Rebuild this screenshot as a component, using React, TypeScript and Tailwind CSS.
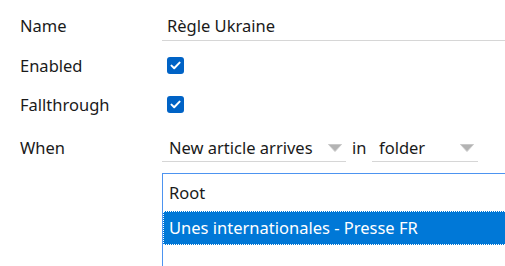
const Checked = () => (
  <div className="w-[17px] h-[17px] rounded-[3px] bg-[#0063c6] flex items-center justify-center">
    <svg width="11" height="9" viewBox="0 0 11 9" fill="none">
      <path d="M1.5 4.6 L4.2 7.2 L9.6 1.6" stroke="white" strokeWidth="2" strokeLinecap="round" strokeLinejoin="round" />
    </svg>
  </div>
);

const Arrow = () => (
  <svg width="14" height="8" viewBox="0 0 14 8">
    <path d="M0.5 0.5 H13.5 L7 7.5 Z" fill="#b3b3b3" stroke="#c8c8c8" strokeWidth="1" strokeLinejoin="round" />
  </svg>
);

const Combo = ({ text, width }: { text: string; width: string }) => (
  <div className={`${width} h-[27px] border-b border-[#d6d6d6] flex items-center justify-between pl-[7px] pr-[4px]`}>
    <span>{text}</span>
    <Arrow />
  </div>
);

export default function App() {
  return (
    <div className="w-[505px] h-[266px] overflow-hidden bg-white text-[#1a1a1a] text-[16.5px] font-['Noto_Sans','Open_Sans',sans-serif] pl-[20px] pt-[12px]">
      <div className="flex h-[29px]">
        <div className="w-[142px] flex items-center">Name</div>
        <div className="flex-1 border-b border-[#d6d6d6] flex items-center pl-[5px]">Règle Ukraine</div>
      </div>
      <div className="flex h-[17px] mt-[16px] items-center">
        <div className="w-[147px] pt-[2px]">Enabled</div>
        <Checked />
      </div>
      <div className="flex h-[17px] mt-[22px] items-center">
        <div className="w-[147px] pt-[2px]">Fallthrough</div>
        <Checked />
      </div>
      <div className="flex h-[27px] mt-[22px] items-center">
        <div className="w-[142px]">When</div>
        <Combo text="New article arrives" width="w-[184px]" />
        <span className="w-[26px] pl-[6px]">in</span>
        <Combo text="folder" width="w-[106px]" />
      </div>
      <div className="flex mt-[11px]">
        <div className="w-[142px] shrink-0" />
        <div className="w-[380px] h-[120px] shrink-0 border border-[#4d94f0] pt-px">
          <div className="h-[36px] flex items-center pl-[6px]">Root</div>
          <div className="h-[34px] flex items-center pl-[5px] bg-[#0078d7] text-white border border-dotted border-white">
            Unes internationales - Presse FR
          </div>
        </div>
      </div>
    </div>
  );
}
